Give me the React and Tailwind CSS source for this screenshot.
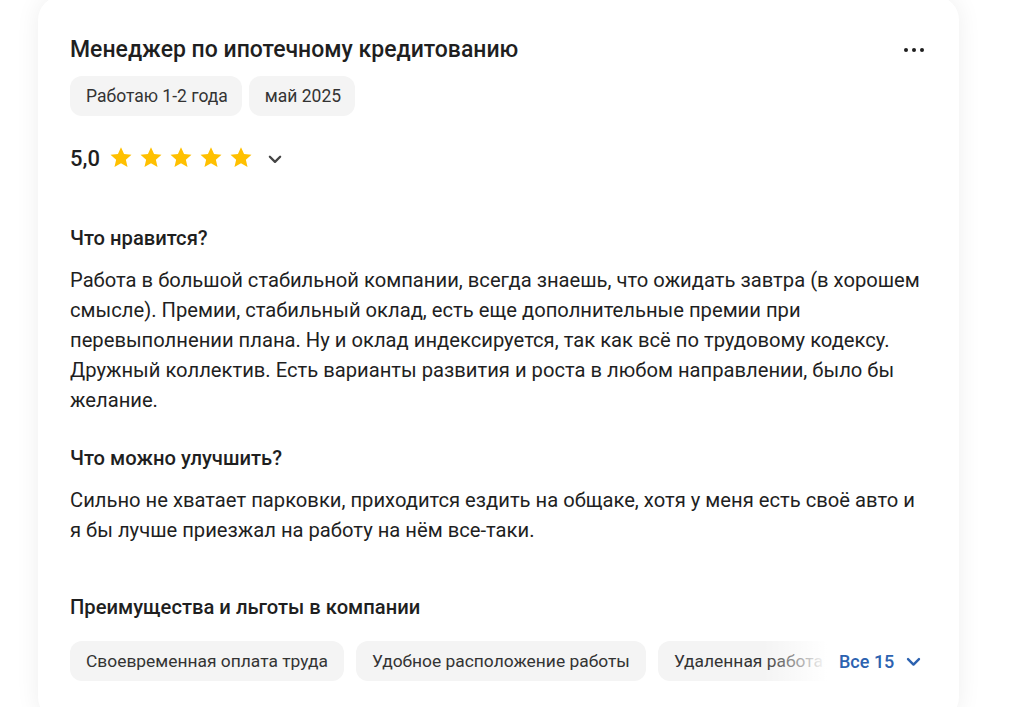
import React from 'react';

const Star = () => (
    <svg width="24" height="24" viewBox="0 0 24 24" className="shrink-0">
        <path fill="#ffc000" d="M12 1.2l3.05 6.9 7.45.68-5.64 4.95 1.68 7.3L12 17.2l-6.54 3.83 1.68-7.3L1.5 8.78l7.45-.68z" />
    </svg>
);

const Chevron = ({ color, size = 14 }) => (
    <svg width={size} height={size} viewBox="0 0 14 14" fill="none">
        <path d="M2.5 5l4.5 4.5L11.5 5" stroke={color} strokeWidth="2" strokeLinecap="round" strokeLinejoin="round" />
    </svg>
);

const benefits = ["Своевременная оплата труда", "Удобное расположение работы", "Удаленная работа"];

const App = () => {
    return (
        <div className="h-[707px] bg-white overflow-hidden" style={{ fontFamily: 'Roboto, "Noto Sans", sans-serif' }}>
            <div className="ml-[38px] w-[921px] -mt-1 rounded-[24px] bg-white shadow-[0_0_24px_rgba(0,0,0,0.07)] pt-10 px-8 pb-10 text-[#1f1f1f]">
                <div className="flex items-center justify-between">
                    <h1 className="text-[23px] leading-7 font-medium">Менеджер по ипотечному кредитованию</h1>
                    <div className="flex gap-[4px] pr-[3px]">
                        <span className="w-[4px] h-[4px] rounded-full bg-[#1f1f1f]"></span>
                        <span className="w-[4px] h-[4px] rounded-full bg-[#1f1f1f]"></span>
                        <span className="w-[4px] h-[4px] rounded-full bg-[#1f1f1f]"></span>
                    </div>
                </div>
                <div className="flex gap-[7px] mt-3">
                    <span className="h-10 pl-4 pr-[14px] flex items-center rounded-xl bg-[#f4f4f4] text-[17.5px] text-[#333]">Работаю 1-2 года</span>
                    <span className="h-10 pl-4 pr-[14px] flex items-center rounded-xl bg-[#f4f4f4] text-[17.5px] text-[#333]">май 2025</span>
                </div>
                <div className="flex items-center mt-7 h-7">
                    <span className="text-[22px] font-medium mr-[9px]">5,0</span>
                    <div className="flex gap-[6px]">
                        <Star /><Star /><Star /><Star /><Star />
                    </div>
                    <span className="ml-[14px] mt-[2px]"><Chevron color="#444" size={16} /></span>
                </div>

                <h2 className="mt-[54px] text-[20.2px] leading-6 font-medium">Что нравится?</h2>
                <p className="mt-[15px] text-[20.2px] leading-[30px] text-[#1f1f1f]">
                    Работа в большой стабильной компании, всегда знаешь, что ожидать завтра (в хорошем смысле). Премии, стабильный оклад, есть еще дополнительные премии при перевыполнении плана. Ну и оклад индексируется, так как всё по трудовому кодексу. Дружный коллектив. Есть варианты развития и роста в любом направлении, было бы желание.
                </p>

                <h2 className="mt-[31px] text-[20.2px] leading-6 font-medium">Что можно улучшить?</h2>
                <p className="mt-[15px] text-[20.2px] leading-[30px] text-[#1f1f1f]">
                    Сильно не хватает парковки, приходится ездить на общаке, хотя у меня есть своё авто и я бы лучше приезжал на работу на нём все-таки.
                </p>

                <h2 className="mt-[50px] text-[20.2px] leading-6 font-medium">Преимущества и льготы в компании</h2>
                <div className="flex items-center mt-[22px]">
                    <div className="relative w-[757px] overflow-hidden">
                        <div className="flex gap-3">
                            {benefits.map((b) => (
                                <span key={b} className="h-10 px-4 flex items-center shrink-0 rounded-xl bg-[#f4f4f4] text-[17.4px] text-[#333] whitespace-nowrap">{b}</span>
                            ))}
                        </div>
                        <div className="absolute right-0 top-0 h-10 w-[64px] bg-gradient-to-r from-white/0 to-white"></div>
                    </div>
                    <button className="ml-3 flex items-center gap-[11px] text-[18px] font-medium text-[#2c62b0]">
                        Все 15
                        <Chevron color="#2c62b0" size={17} />
                    </button>
                </div>
            </div>
        </div>
    );
};

export default App;
